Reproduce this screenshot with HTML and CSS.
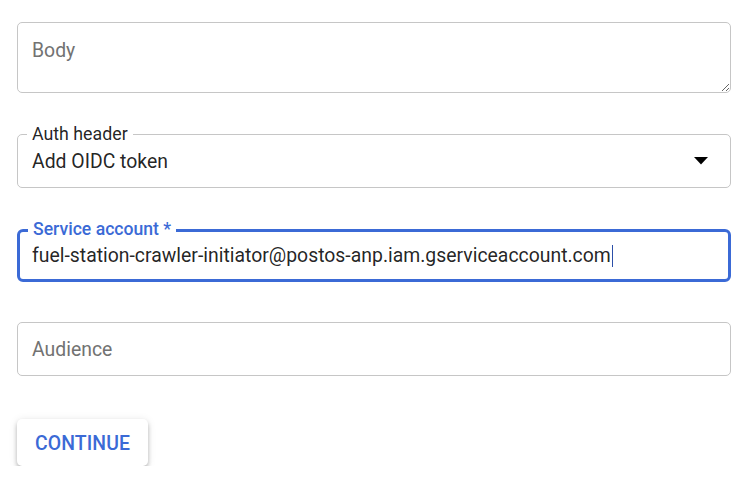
FILE: index.html
```html
<!DOCTYPE html>
<html>
<head>
<meta charset="utf-8">
<link rel="stylesheet" href="styles.css">
</head>
<body>
<form class="form">
  <div class="field field-body">
    <textarea class="area" placeholder="Body"></textarea>
  </div>

  <div class="field field-select">
    <span class="label">Auth header</span>
    <div class="value">Add OIDC token</div>
    <svg class="arrow" width="16" height="8" viewBox="0 0 16 8"><path d="M1 0 L15 0 L8 7.5 Z" fill="#000"/></svg>
  </div>

  <div class="field field-focus">
    <span class="label label-focus">Service account *</span>
    <div class="value">fuel-station-crawler-initiator@postos-anp.iam.gserviceaccount.com<span class="caret"></span></div>
  </div>

  <div class="field">
    <div class="value placeholder">Audience</div>
  </div>

  <div class="actions">
    <button type="button" class="btn">CONTINUE</button>
  </div>
</form>
</body>
</html>
```

FILE: styles.css
```css
* { box-sizing: border-box; }
html, body { margin: 0; padding: 0; background: #fff; }
body { font-family: Roboto, "Noto Sans", sans-serif; color: rgba(0,0,0,0.87); }

.form {
  display: flex;
  flex-direction: column;
  gap: 41px;
  padding: 22px 24px 0 17px;
  width: 755px;
}

.field {
  position: relative;
  width: 714px;
  height: 54px;
  border: 1px solid #c6c6c6;
  border-radius: 5px;
  display: flex;
  align-items: center;
  padding: 2px 14px 0;
}

.field-body {
  height: 71px;
  padding: 0;
  align-items: stretch;
}

.area {
  width: 100%;
  height: 100%;
  border: none;
  outline: none;
  border-radius: 5px;
  resize: vertical;
  padding: 16px 14px 14px;
  font-family: Roboto, sans-serif;
  font-size: 19.4px;
  color: rgba(0,0,0,0.87);
  background: transparent;
}
.area::placeholder { color: #727272; }

.value {
  font-size: 19.4px;
  line-height: 24px;
  white-space: nowrap;
  display: flex;
  align-items: center;
}
.placeholder { color: #727272; }

.label {
  position: absolute;
  left: 9px;
  top: -12px;
  padding: 0 5px;
  background: #fff;
  font-size: 17.8px;
  line-height: 21px;
  color: rgba(0,0,0,0.87);
}
.label-focus { color: #3b6ad6; font-weight: 500; left: 8px; top: -13px; font-size: 17.6px; }

.field-focus {
  height: 53px;
  margin-bottom: -1px;
  border: 3px solid #3b6ad6;
  border-radius: 6px;
  padding: 1px 12px 0;
}

.caret {
  display: inline-block;
  width: 1px;
  height: 22px;
  background: #2c4fa8;
  margin-left: 1px;
}

.arrow {
  position: absolute;
  right: 21px;
  top: 22px;
}

.actions { display: flex; margin-top: 2px; }

.btn {
  width: 131px;
  height: 47px;
  border: none;
  border-radius: 5px;
  background: #fff;
  box-shadow: 0 3px 4px rgba(0,0,0,0.24), 0 1px 8px rgba(0,0,0,0.1);
  color: #3b6ad6;
  font-family: Roboto, sans-serif;
  font-weight: 500;
  font-size: 19.4px;
  letter-spacing: 0.1px;
  padding: 2px 0 0;
}
```
